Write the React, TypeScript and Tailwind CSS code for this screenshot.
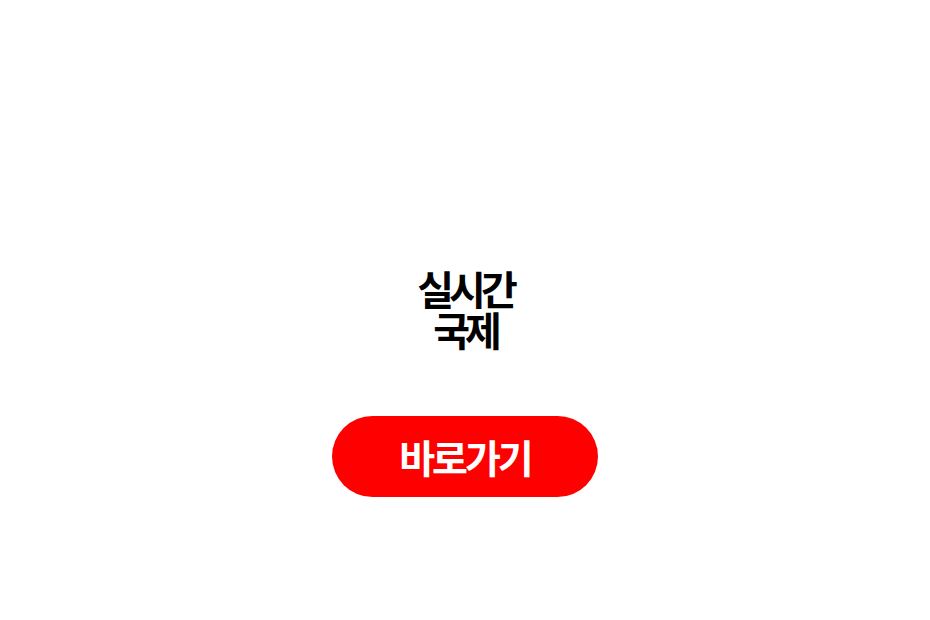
export default function App() {
  return (
    <div
      className="min-h-screen w-full bg-white flex flex-col items-center pt-[268px]"
      style={{ fontFamily: '"Noto Sans CJK KR", "Noto Sans", sans-serif' }}
    >
      {/* Title */}
      <h1 className="text-center text-[40px] leading-[41px] font-bold tracking-[-5px] text-black">
        실시간
        <br />
        국제
      </h1>

      {/* CTA */}
      <button className="mt-[66px] w-[266px] h-[81px] rounded-full bg-[#ff0000] text-white text-[39px] font-semibold tracking-[-3px] flex items-center justify-center">
        바로가기
      </button>
    </div>
  )
}
